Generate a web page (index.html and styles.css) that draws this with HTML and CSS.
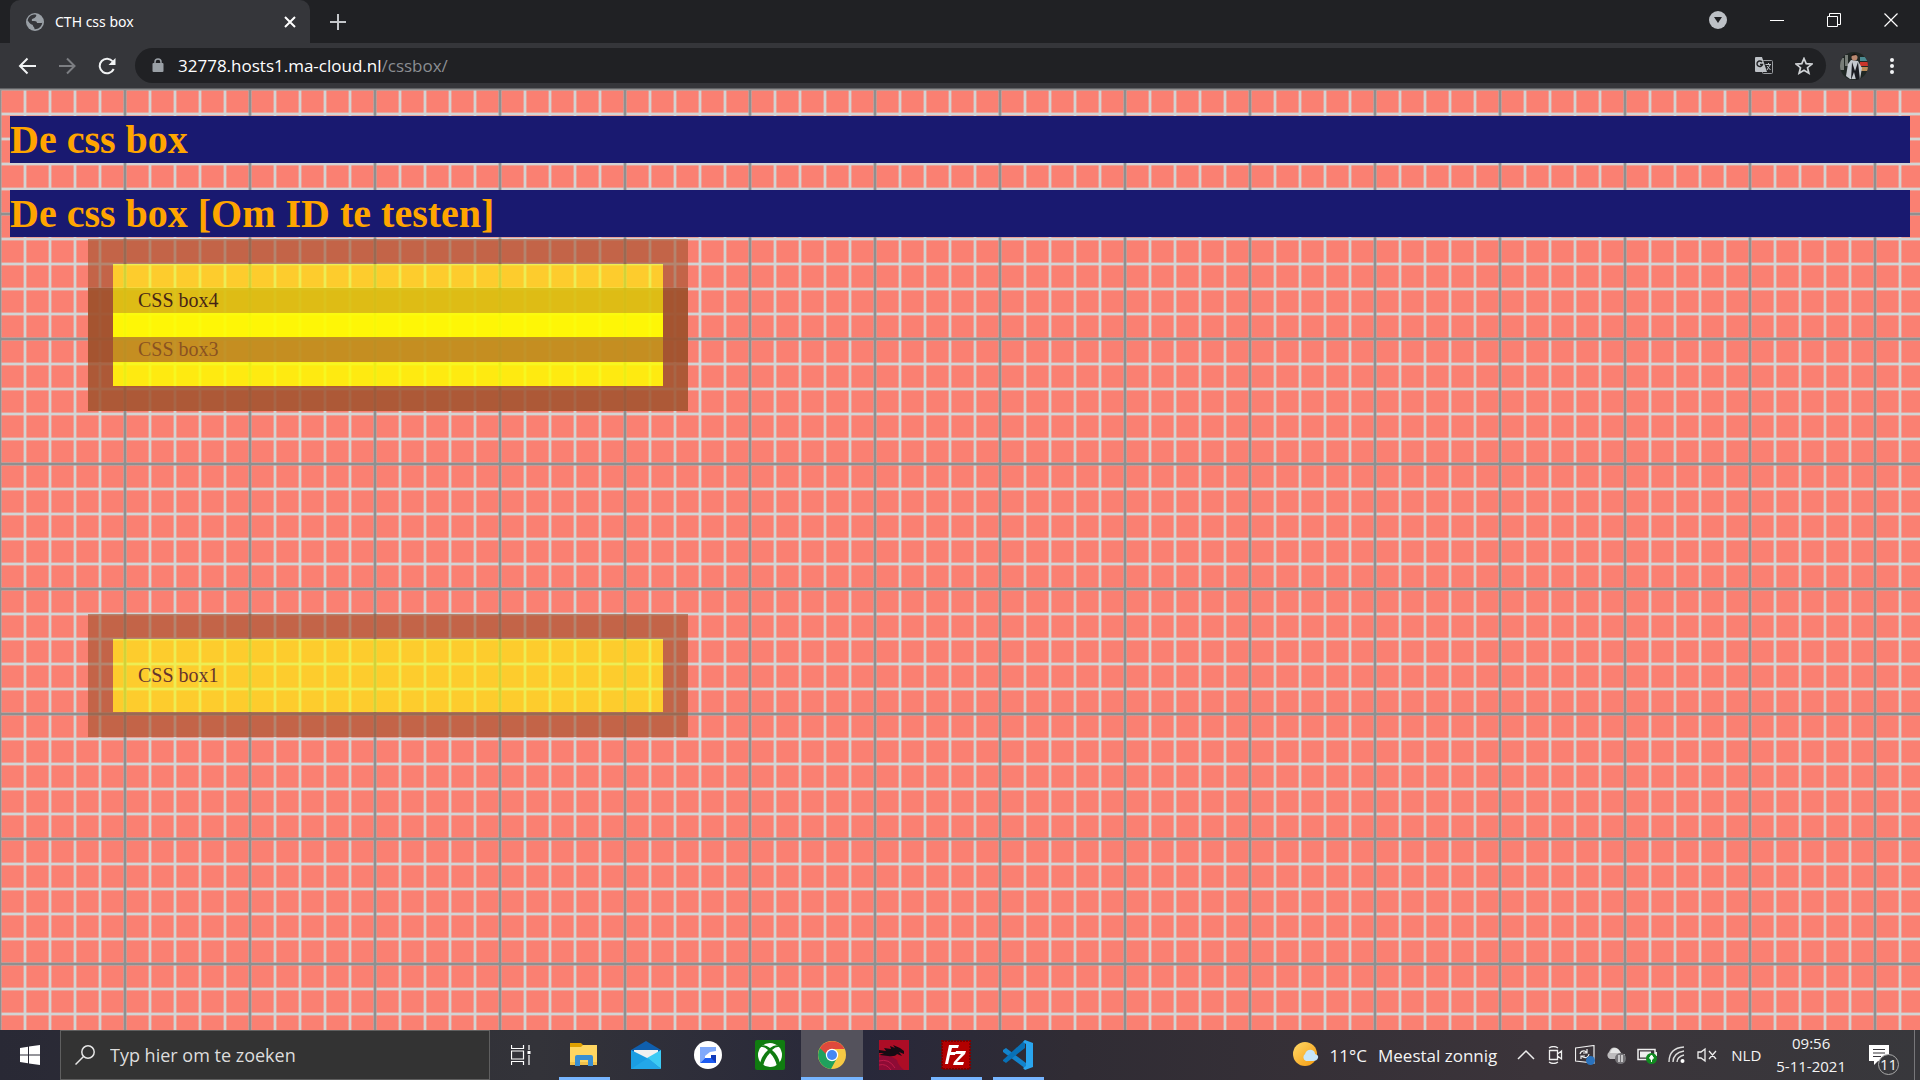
FILE: index.html
```html
<!DOCTYPE html>
<html lang="nl">
<head>
<meta charset="utf-8">
<title>CTH css box</title>
<link rel="stylesheet" href="styles.css">
</head>
<body>
<header class="chrome">
  <div class="tabstrip">
    <div class="tab">
      <svg class="i18" viewBox="0 0 18 18"><circle cx="9" cy="9" r="9" fill="#9aa0a6"/><path d="M7 1.800C11 1 11 3 9 4.500C8 6 5 5 6 8C9 8 11 8 11 10H15C16 10 16.500 9.500 16.500 8.500C16 14 12 16.500 8.500 16.200C9 14 6 13 7 12C3 11 3 8 1.700 8C2 4 5 2 7 1.800" fill="#35363a"/></svg>
      <span class="tab-title">CTH css box</span>
      <button class="bare" aria-label="Tabblad sluiten"><svg class="i12" viewBox="0 0 12 12"><path d="M1 1L11 11M11 1L1 11" stroke="#fff" stroke-width="2"/></svg></button>
    </div>
    <button class="bare newtab" aria-label="Nieuw tabblad"><svg class="i16" viewBox="0 0 16 16"><path d="M8 0V16M0 8H16" stroke="#c4c7ca" stroke-width="2"/></svg></button>
    <div class="winctl">
      <button class="bare" aria-label="Tabbladen zoeken"><svg class="i18" viewBox="0 0 18 18"><circle cx="9" cy="9" r="9" fill="#bdc1c6"/><path d="M5 6H13L9 12Z" fill="#202124"/></svg></button>
      <button class="bare" aria-label="Minimaliseren"><svg class="i14" viewBox="0 0 14 14"><path d="M0 7.500H14" stroke="#fff"/></svg></button>
      <button class="bare" aria-label="Vorig formaat"><svg class="i14" viewBox="0 0 14 14"><path d="M.5 3.500H10.500V13.500H.5ZM2.500 3V.5H13.500V11.500H11" fill="none" stroke="#fff"/></svg></button>
      <button class="bare" aria-label="Sluiten"><svg class="i14" viewBox="0 0 14 14"><path d="M.5.5L13.500 13.500M13.500.5L.5 13.500" stroke="#fff" stroke-width="1.200"/></svg></button>
    </div>
  </div>
  <div class="toolbar">
    <div class="nav">
      <button class="bare" aria-label="Terug"><svg class="i18" viewBox="0 0 18 18"><path d="M18 9H2M9.500 1.500L2 9L9.500 16.500" fill="none" stroke="#f1f3f4" stroke-width="2"/></svg></button>
      <button class="bare" aria-label="Vooruit"><svg class="i18" viewBox="0 0 18 18"><path d="M1 9H16M9 1.500L16.500 9L9 16.500" fill="none" stroke="#7c7e82" stroke-width="2"/></svg></button>
      <button class="bare" aria-label="Vernieuwen"><svg class="i18" viewBox="0 0 18 18"><path d="M14.800 4.500A7.300 7.300 0 1 0 15.700 12" fill="none" stroke="#f1f3f4" stroke-width="2"/><path d="M17.500 1V8H10.500Z" fill="#f1f3f4"/></svg></button>
    </div>
    <div class="omnibox">
      <svg class="lock" viewBox="0 0 12 16"><rect y="5" x=".5" width="11" height="9" rx="1" fill="#9aa0a6"/><path d="M3 6V4A3 3 0 0 1 9 4V6" fill="none" stroke="#9aa0a6" stroke-width="1.500"/></svg>
      <span class="url">32778.hosts1.ma-cloud.nl<span class="path">/cssbox/</span></span>
      <div class="nav">
        <button class="bare" aria-label="Vertalen"><svg class="i18" viewBox="0 0 18 18"><rect x="7.500" y="3.500" width="10" height="13" rx="1" fill="none" stroke="#9a9da1"/><path d="M1 0H7L12 15H1A1 1 0 0 1 0 14V1A1 1 0 0 1 1 0" fill="#bdc1c6"/><path d="M7 5A2.800 2.800 0 1 0 7.500 7.500H5" fill="none" stroke="#202124" stroke-width="1.400"/><path d="M10.500 7.500H16M13.500 6V7.500M12 13L15 8M12 9L15.500 13" fill="none" stroke="#bdc1c6"/></svg></button>
        <button class="bare" aria-label="Bladwijzer"><svg class="i18" viewBox="0 0 18 18"><path d="M9 1.500L11.200 6.700L16.800 7.100L12.500 10.700L13.900 16.200L9 13.200L4.100 16.200L5.500 10.700L1.200 7.100L6.800 6.700Z" fill="none" stroke="#d0d3d6" stroke-width="1.700"/></svg></button>
      </div>
    </div>
    <div class="nav">
      <button class="bare" aria-label="Profiel"><svg class="i28" viewBox="0 0 28 28"><defs><clipPath id="av"><circle cx="14" cy="14" r="14"/></clipPath></defs><g clip-path="url(#av)"><rect width="28" height="28" fill="#202724"/><path d="M0 6H4V18H0ZM5 3H8V14H5Z" fill="#777d78"/><path d="M20 5H28V9H20Z" fill="#4b8a91"/><path d="M20 10H28V14H20Z" fill="#c9352b"/><path d="M21 15H28V19H21Z" fill="#b98b57"/><path d="M11 8L8 12L6 24L10 27H20L22 16L18 9Z" fill="#c3c8ce"/><path d="M12 10L15 19L18 10L20 28H16L14 20L11 28Z" fill="#191b21"/><circle cx="14.500" cy="5.500" r="3" fill="#b98870"/><path d="M11 4Q14-1 18 4L16 3Z" fill="#17110f"/></g></svg></button>
      <button class="bare" aria-label="Menu"><svg class="dots" viewBox="0 0 4 18"><g fill="#f1f3f4"><circle cx="2" cy="3" r="2"/><circle cx="2" cy="9" r="2"/><circle cx="2" cy="15" r="2"/></g></svg></button>
    </div>
  </div>
</header>

<main class="page">
  <h1>De css box</h1>
  <h1 id="test">De css box [Om ID te testen]</h1>
  <div class="canvas">
    <div class="box box2"></div>
    <div class="box box3">CSS box3</div>
    <div class="box box4">CSS box4</div>
    <div class="box box1">CSS box1</div>
  </div>
</main>

<footer class="taskbar">
  <button class="bare start" aria-label="Start"><svg class="i20" viewBox="0 0 20 20"><path d="M0 3L8 1.800V9.500H0ZM9 1.600L20 0V9.500H9ZM0 10.500H8V18.200L0 17ZM9 10.500H20V20L9 18.400Z" fill="#fff"/></svg></button>
  <label class="search">
    <svg class="i20" viewBox="0 0 20 20"><circle cx="13" cy="7" r="6.200" fill="none" stroke="#e6e6e6" stroke-width="1.500"/><path d="M8.500 11.500L.5 19.500" stroke="#e6e6e6" stroke-width="1.500"/></svg>
    <input type="text" placeholder="Typ hier om te zoeken" aria-label="Zoeken">
  </label>
  <button class="bare app view" aria-label="Taakweergave"><svg class="i20" viewBox="0 0 20 20"><path d="M.5 0V3.500H12.500V0M.5 20V16.500H12.500V20M.5 6H12.500V14H.5ZM18 0V5M18 10V20" fill="none" stroke="#fff" stroke-width="1.200"/><path d="M16.500 6H19.500V9H16.500Z" fill="#fff"/></svg></button>
  <nav class="apps">
    <button class="bare app open" aria-label="Verkenner"><svg class="i30" viewBox="0 0 30 30"><path d="M1 3H12L14 5V9H1Z" fill="#dfa000"/><path d="M1 7H12L14 5H28V25H1Z" fill="#ffd661"/><path d="M1 22H28V25H1Z" fill="#f2c24b"/><path d="M6 26V17Q6 15 8 15H22Q24 15 24 17V26H19V20H11V26Z" fill="#398fd2"/></svg></button>
    <button class="bare app" aria-label="Mail"><svg class="i30" viewBox="0 0 30 30"><path d="M0 10L15 1L30 10V17H0Z" fill="#0f5fae"/><path d="M3 10H27V19H3Z" fill="#f2f1f0"/><path d="M0 10L18 19L30 29H0Z" fill="#1b9de2"/><path d="M30 10L16 18L30 29Z" fill="#3dcbf4"/><path d="M0 29H30L17 18Z" fill="#23a7e8"/></svg></button>
    <button class="bare app" aria-label="G-app"><svg class="i30" viewBox="0 0 30 30"><circle cx="15" cy="15" r="14" fill="#fff"/><path d="M7 7H23V11L17 12L12 16V18L7 23Z" fill="#80a9fb"/><path d="M7 23L12 18H18L19 15H23V23Z" fill="#1d5cf2"/><path d="M18 15H23V23L18 18Z" fill="#113aba"/></svg></button>
    <button class="bare app" aria-label="Xbox"><svg class="i30" viewBox="0 0 30 30"><rect width="30" height="30" rx="2" fill="#107c10"/><circle cx="15" cy="15" r="12" fill="#fff"/><path d="M6 6Q10 4 15 8Q20 4 24 6L26 7Q21 6 17 10Q23 15 25 23L22 26Q20 18 15 13Q10 18 8 26L5 23Q7 15 13 10Q9 6 4 7Z" fill="#107c10"/></svg></button>
    <button class="bare app open active" aria-label="Chrome"><svg class="i30" viewBox="0 0 30 30"><circle cx="15" cy="15" r="14" fill="#f6c944"/><path d="M3 8A14 14 0 0 0 14 29L20 18L15 15L9 12Z" fill="#20a15d"/><path d="M3 8A14 14 0 0 1 27.500 9H15Q11 9 9 14Z" fill="#df493c"/><circle cx="15" cy="15" r="6.200" fill="#fff"/><circle cx="15" cy="15" r="5" fill="#4687f4"/></svg></button>
    <button class="bare app" aria-label="Draak"><svg class="i30" viewBox="0 0 30 30"><rect width="30" height="30" fill="#ad0d26"/><path d="M0 17Q8 13 18 20Q19 25 25 30H0Z" fill="#8e0b35"/><path d="M0 21Q10 18 16 28M0 25Q7 23 12 30" fill="none" stroke="#c01c4a"/><path d="M0 10L7 11L5 8L12 9L11 6L16 8L14 5L21 8L25 11L25 14L20 12L23 16L18 14Q16 17 9 16L0 15L5 13L0 13Z" fill="#160b13"/></svg></button>
    <button class="bare app open" aria-label="FileZilla"><svg class="i30" viewBox="0 0 30 30"><rect x="1" y="1" width="28" height="28" fill="#b30000" stroke="#7d0000" stroke-width="2" stroke-dasharray="2 1"/><path d="M8 5H18L17 8H11L10 12H15L14 15H9L7 24H4ZM15 11H25L24 14L16 22H23L22 25H12L13 22L20 14H14Z" fill="#fff"/></svg></button>
    <button class="bare app open" aria-label="Visual Studio Code"><svg class="i30" viewBox="0 0 30 30"><path d="M0 10L3 8L23 23V29L0 12Z" fill="#1283cc"/><path d="M0 20L22 0V8L3 23L0 21Z" fill="#0871b7"/><path d="M22 0L30 3V27L22 30L20 28L23 26V4L20 2Z" fill="#2aa5ee"/></svg></button>
  </nav>
  <div class="tray">
    <button class="bare weather"><svg class="i26" viewBox="0 0 26 26"><defs><linearGradient id="sun" x1="0" y1="0" x2="1" y2="1"><stop stop-color="#ffd968"/><stop offset="1" stop-color="#f59a0e"/></linearGradient></defs><circle cx="12" cy="12" r="12" fill="url(#sun)"/><path d="M13 19A4 4 0 0 1 12 12Q14 7 19 8Q22 9 22 12Q26 13 25 16Q24 19 20 19Z" fill="#c6e6fa"/></svg><span>11°C</span><span>Meestal zonnig</span></button>
    <div class="status">
      <svg class="i18" viewBox="0 0 18 18"><path d="M1 13L9 5L17 13" fill="none" stroke="#eee" stroke-width="1.500"/></svg>
      <svg class="i18" viewBox="0 0 18 18"><path d="M3.500 4.500H11.500V13.500H3.500ZM11.500 8L15.500 5V13L11.500 10M3 2Q7.500 -1 12 2M3 16Q7.500 19 12 16" fill="none" stroke="#eee" stroke-width="1.300"/></svg>
      <svg class="i20" viewBox="0 0 20 20"><path d="M.5 3L19 .5V18L.5 16ZM5 9Q6 5 10 6L12 8M12 4V8H8M14 9Q13 14 8 12L6 11M6 14V11H10" fill="none" stroke="#eee" stroke-width="1.200"/><circle cx="15.500" cy="15.500" r="4.500" fill="#2a72bd"/></svg>
      <svg class="i20" viewBox="0 0 20 20"><path d="M4 14A4 4 0 0 1 3 7Q6 0 12 4Q15 6 15 9H19V14Z" fill="#bdbbbd"/><path d="M4 8Q6 1 12 4L15 8Z" fill="#e5e5e5"/><circle cx="14.500" cy="13.500" r="5.500" fill="#747276"/><path d="M13 10V17M16 10V17" stroke="#fff" stroke-width="1.200"/></svg>
      <svg class="i20" viewBox="0 0 20 20"><path d="M1 4.500H18V14.500H1Z" fill="none" stroke="#eee" stroke-width="1.500"/><path d="M3 6.500H14V12.500H3ZM18 7H20V11H18Z" fill="#eee"/><circle cx="14.500" cy="13.500" r="5.500" fill="#108a20"/><path d="M14.500 10L16.500 13L14.500 15L12.500 13ZM14.500 14V17" fill="#fff" stroke="#fff"/></svg>
      <svg class="i18" viewBox="0 0 18 18"><path d="M1 16Q1 2 16 1M5 16Q5 7 16 5M9 16Q9 11 16 9" fill="none" stroke="#ddd" stroke-width="1.400"/><circle cx="14.500" cy="15" r="2" fill="#fff"/></svg>
      <svg class="i20" viewBox="0 0 20 20"><path d="M1 7H4L8 4V16L4 13H1ZM12 6L19 14M19 6L12 14" fill="none" stroke="#eee" stroke-width="1.300"/></svg>
    </div>
    <span class="lang">NLD</span>
    <div class="clock"><span>09:56</span><span>5-11-2021</span></div>
    <button class="bare notes" aria-label="Meldingen"><svg class="i20" viewBox="0 0 20 20"><path d="M0 0H20V16H9L5 20V16H0Z" fill="#fff"/><path d="M4 4.500H16M4 8H16M4 11.500H12" stroke="#38363b" stroke-width="1.200"/></svg><span class="count">11</span></button>
    <button class="bare desktop" aria-label="Bureaublad weergeven"></button>
  </div>
</footer>
</body>
</html>
```
FILE: styles.css
```css
* { box-sizing: border-box; }
body {
  margin: 0;
  min-height: 100vh;
  display: flex;
  flex-direction: column;
  font-family: "Open Sans", "Noto Sans", sans-serif;
}
svg { display: block; flex: none; }
.bare { border: 0; padding: 0; background: none; color: inherit; font: inherit; display: flex; align-items: center; justify-content: center; }
.i12 { width: 12px; height: 12px; }
.i14 { width: 14px; height: 14px; }
.i16 { width: 16px; height: 16px; }
.i18 { width: 18px; height: 18px; }
.i20 { width: 20px; height: 20px; }
.i26 { width: 26px; height: 26px; }
.i28 { width: 28px; height: 28px; }
.i30 { width: 30px; height: 30px; }

.chrome { background: #35363a; color: #fff; border-bottom: 1px solid #606164; }
.tabstrip { display: flex; align-items: center; height: 43px; padding-left: 10px; background: #202124; }
.tab { display: flex; align-items: center; gap: 11px; width: 300px; height: 43px; padding: 0 14px 0 16px; background: #35363a; border-radius: 10px 10px 0 0; }
.tab-title { flex: 1; font: 14px/20px "Noto Sans", sans-serif; }
.newtab { margin-left: 20px; }
.winctl { display: flex; align-items: center; gap: 43px; margin-left: auto; padding: 0 22px 4px 0; }
.toolbar { display: flex; align-items: center; height: 45px; padding: 0 26px 0 18px; }
.nav { display: flex; align-items: center; gap: 22px; }
.omnibox { flex: 1; display: flex; align-items: center; height: 35px; margin: 0 14px 0 19px; padding: 0 13px 0 17px; border-radius: 18px; background: #202124; }
.lock { width: 12px; height: 16px; }
.url { flex: 1; margin-left: 14px; font-size: 17px; line-height: 24px; }
.path { color: #8b8e92; }
.dots { width: 4px; height: 18px; }

.page {
  --major: #909090 1px, #90909066 1px 2px, transparent 2px 123px, #90909066 123px 124px, #909090 124px;
  --minor: #d3d3d3 1px, #d3d3d366 1px 2px, transparent 2px 23px, #d3d3d366 23px 24px, #d3d3d3 24px;
  flex: 1;
  padding: 27px 10px 0;
  background-color: salmon;
  background-image:
    linear-gradient(90deg, var(--major)),
    linear-gradient(var(--major)),
    linear-gradient(90deg, var(--minor)),
    linear-gradient(var(--minor));
  background-size: 125px 125px, 125px 125px, 25px 25px, 25px 25px;
  font-family: "Liberation Serif", "Times New Roman", serif;
}
h1 { margin: 0 0 27px; background: midnightblue; color: orange; font-size: 40px; line-height: 47px; }
#test { margin-bottom: 2px; }
.canvas { display: grid; grid-template-rows: 49px 326px auto; grid-template-columns: minmax(0, 600px); padding-left: 78px; align-items: start; }
.box { grid-column: 1; height: 123px; padding: 25px; border: 25px solid sienna; background: yellow; background-clip: padding-box; color: #000; font-size: 20px; line-height: 23px; opacity: .6; }
.box4 { grid-row: 1; }
.box2, .box3 { grid-row: 2; }
.box1 { grid-row: 3; }

.taskbar { display: flex; align-items: center; height: 50px; background: linear-gradient(90deg, #292935, #333339 28%, #28283a 45%, #302c34 56%, #3b343a 80%, #38383c); color: #f4f4f4; }
.start { width: 60px; height: 50px; }
.search { display: flex; align-items: center; gap: 15px; width: 430px; height: 50px; padding: 0 14px; border: 1px solid #5f5f5f; background: #333; }
.search input { flex: 1; min-width: 0; border: 0; padding: 0; outline: 0; background: none; color: #ddd; font: 18px/26px "Open Sans", sans-serif; }
.search input::placeholder { color: #ddd; opacity: 1; }
.app { width: 62px; height: 50px; }
.apps { display: flex; padding-left: 1px; }
.open { background: linear-gradient(#76b5ff, #76b5ff) bottom / 51px 3px no-repeat; }
.active { background: linear-gradient(#76b5ff, #76b5ff) bottom / 100% 3px no-repeat, #54525c; }
.tray { display: flex; align-items: center; height: 50px; margin-left: auto; }
.weather { gap: 11px; font-size: 17px; }
.status { display: flex; align-items: center; gap: 11px; margin-left: 20px; }
.lang { margin-left: 14px; font-size: 15px; }
.clock { display: flex; flex-direction: column; align-items: center; margin-left: 15px; font-size: 15px; line-height: 23px; }
.notes { position: relative; justify-content: flex-start; width: 30px; height: 40px; margin-left: 23px; }
.count { position: absolute; right: 0; bottom: 0; width: 21px; height: 21px; border: 1px solid #aaa; border-radius: 50%; background: #38383c; font-size: 15px; line-height: 19px; text-align: center; }
.desktop { width: 6px; height: 50px; margin-left: 15px; border-left: 1px solid #77777a; }
```
